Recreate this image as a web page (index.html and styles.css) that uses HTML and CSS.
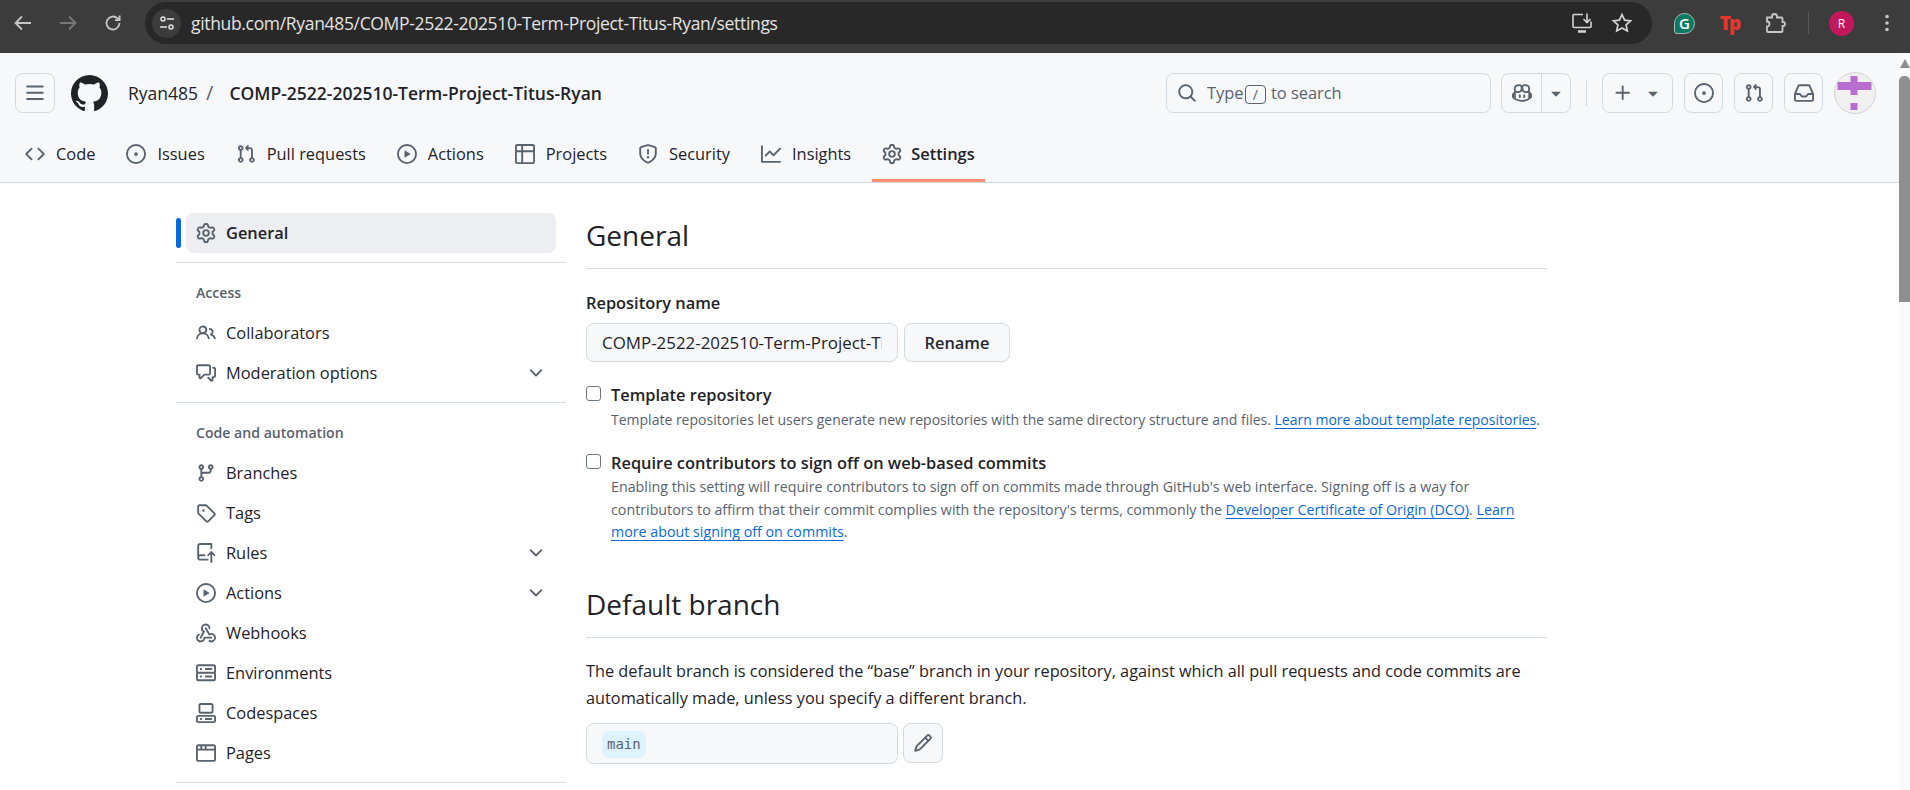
FILE: index.html
```html
<!DOCTYPE html>
<html lang="en">
<head>
    <meta charset="UTF-8">
    <meta name="viewport" content="width=device-width, initial-scale=1.0">
    <title>General - COMP-2522-202510-Term-Project-Titus-Ryan</title>
    <link rel="stylesheet" href="styles.css">
</head>
<body>
    <svg class="sprite" xmlns="http://www.w3.org/2000/svg">
        <symbol id="i-bars" viewBox="0 0 16 16"><path d="M1 2.75A.75.75 0 0 1 1.75 2h12.5a.75.75 0 0 1 0 1.5H1.75A.75.75 0 0 1 1 2.75Zm0 5A.75.75 0 0 1 1.75 7h12.5a.75.75 0 0 1 0 1.5H1.75A.75.75 0 0 1 1 7.75ZM1.75 12h12.5a.75.75 0 0 1 0 1.5H1.75a.75.75 0 0 1 0-1.5Z"/></symbol>
        <symbol id="i-github" viewBox="0 0 16 16"><path d="M8 0c4.42 0 8 3.58 8 8a8.013 8.013 0 0 1-5.45 7.59c-.4.08-.55-.17-.55-.38 0-.27.01-1.13.01-2.2 0-.75-.25-1.23-.54-1.48 1.78-.2 3.65-.88 3.65-3.95 0-.88-.31-1.59-.82-2.15.08-.2.36-1.02-.08-2.12 0 0-.67-.22-2.2.82-.64-.18-1.32-.27-2-.27-.68 0-1.36.09-2 .27-1.53-1.03-2.2-.82-2.2-.82-.44 1.1-.16 1.92-.08 2.12-.51.56-.82 1.28-.82 2.15 0 3.06 1.86 3.75 3.64 3.95-.23.2-.44.55-.51 1.07-.46.21-1.61.55-2.33-.66-.15-.24-.6-.83-1.23-.82-.67.01-.27.38.01.53.34.19.73.9.82 1.13.16.45.68 1.31 2.69.94 0 .67.01 1.3.01 1.49 0 .21-.15.45-.55.38A7.995 7.995 0 0 1 0 8c0-4.42 3.58-8 8-8Z"/></symbol>
        <symbol id="i-search" viewBox="0 0 16 16"><path d="M10.68 11.74a6 6 0 0 1-7.922-8.982 6 6 0 0 1 8.982 7.922l3.04 3.04a.749.749 0 0 1-.326 1.275.749.749 0 0 1-.734-.215ZM11.5 7a4.499 4.499 0 1 0-8.997 0A4.499 4.499 0 0 0 11.5 7Z"/></symbol>
        <symbol id="i-copilot" viewBox="0 0 16 16"><path d="M7.998 15.035c-4.562 0-7.873-2.914-7.998-3.749V9.338c.085-.628.677-1.686 1.588-2.065.013-.07.024-.143.036-.218.029-.183.06-.384.126-.612-.201-.508-.254-1.084-.254-1.656 0-.87.128-1.769.693-2.484.579-.733 1.494-1.124 2.724-1.261 1.206-.134 2.262.034 2.944.765.05.053.096.108.139.165.044-.057.094-.112.143-.165.682-.731 1.738-.899 2.944-.765 1.23.137 2.145.528 2.724 1.261.566.715.693 1.614.693 2.484 0 .572-.053 1.148-.254 1.656.066.228.098.429.126.612.012.076.024.148.037.218.924.385 1.522 1.471 1.591 2.095v1.872c0 .766-3.351 3.795-8.002 3.795Zm0-1.485c2.28 0 4.584-1.11 5.002-1.433V7.862l-.023-.116c-.49.21-1.075.291-1.727.291-1.146 0-2.059-.327-2.71-.991A3.222 3.222 0 0 1 8 6.303a3.24 3.24 0 0 1-.544.743c-.65.664-1.563.991-2.71.991-.652 0-1.236-.081-1.727-.291l-.023.116v4.255c.419.323 2.722 1.433 5.002 1.433ZM6.762 2.83c-.193-.206-.637-.413-1.682-.297-1.019.113-1.479.404-1.713.7-.247.312-.369.789-.369 1.554 0 .793.129 1.171.308 1.371.162.181.519.379 1.442.379.853 0 1.339-.235 1.638-.54.315-.322.527-.827.617-1.553.117-.935-.037-1.395-.241-1.614Zm4.155-.297c-1.044-.116-1.488.091-1.681.297-.204.219-.359.679-.242 1.614.091.726.303 1.231.618 1.553.299.305.784.54 1.638.54.922 0 1.28-.198 1.442-.379.179-.2.308-.578.308-1.371 0-.765-.123-1.242-.37-1.554-.233-.296-.693-.587-1.713-.7Z"/><path d="M6.25 9.037a.75.75 0 0 1 .75.75v1.501a.75.75 0 0 1-1.5 0V9.787a.75.75 0 0 1 .75-.75Zm4.25.75v1.501a.75.75 0 0 1-1.5 0V9.787a.75.75 0 0 1 1.5 0Z"/></symbol>
        <symbol id="i-plus" viewBox="0 0 16 16"><path d="M7.75 2a.75.75 0 0 1 .75.75V7h4.25a.75.75 0 0 1 0 1.5H8.5v4.25a.75.75 0 0 1-1.5 0V8.5H2.75a.75.75 0 0 1 0-1.5H7V2.75A.75.75 0 0 1 7.75 2Z"/></symbol>
        <symbol id="i-issue" viewBox="0 0 16 16"><path d="M8 9.5a1.5 1.5 0 1 0 0-3 1.5 1.5 0 0 0 0 3Z"/><path d="M8 0a8 8 0 1 1 0 16A8 8 0 0 1 8 0ZM1.5 8a6.5 6.5 0 1 0 13 0 6.5 6.5 0 0 0-13 0Z"/></symbol>
        <symbol id="i-pr" viewBox="0 0 16 16"><path d="M1.5 3.25a2.25 2.25 0 1 1 3 2.122v5.256a2.251 2.251 0 1 1-1.5 0V5.372A2.25 2.25 0 0 1 1.5 3.25Zm5.677-.177L9.573.677A.25.25 0 0 1 10 .854V2.5h1A2.5 2.5 0 0 1 13.5 5v5.628a2.251 2.251 0 1 1-1.5 0V5a1 1 0 0 0-1-1h-1v1.646a.25.25 0 0 1-.427.177L7.177 3.427a.25.25 0 0 1 0-.354ZM3.75 2.5a.75.75 0 1 0 0 1.5.75.75 0 0 0 0-1.5Zm0 9.5a.75.75 0 1 0 0 1.5.75.75 0 0 0 0-1.5Zm8.25.75a.75.75 0 1 0 1.5 0 .75.75 0 0 0-1.5 0Z"/></symbol>
        <symbol id="i-inbox" viewBox="0 0 16 16"><path d="M2.8 2.06A1.75 1.75 0 0 1 4.41 1h7.18c.7 0 1.333.417 1.61 1.06l2.74 6.395c.04.093.06.194.06.295v4.5A1.75 1.75 0 0 1 14.25 15H1.75A1.75 1.75 0 0 1 0 13.25v-4.5c0-.101.02-.202.06-.295Zm1.61.44a.25.25 0 0 0-.23.152L1.887 8H4.75a.75.75 0 0 1 .6.3L6.625 10h2.75l1.275-1.7a.75.75 0 0 1 .6-.3h2.863L11.82 2.652a.25.25 0 0 0-.23-.152Zm10.09 7h-2.875l-1.275 1.7a.75.75 0 0 1-.6.3h-3.5a.75.75 0 0 1-.6-.3L4.375 9.5H1.5v3.75c0 .138.112.25.25.25h12.5a.25.25 0 0 0 .25-.25Z"/></symbol>
        <symbol id="i-code" viewBox="0 0 16 16"><path d="m11.28 3.22 4.25 4.25a.75.75 0 0 1 0 1.06l-4.25 4.25a.749.749 0 0 1-1.275-.326.749.749 0 0 1 .215-.734L13.94 8l-3.72-3.72a.749.749 0 0 1 .326-1.275.749.749 0 0 1 .734.215Zm-6.56 0a.751.751 0 0 1 1.042.018.751.751 0 0 1 .018 1.042L2.06 8l3.72 3.72a.749.749 0 0 1-.326 1.275.749.749 0 0 1-.734-.215L.47 8.53a.75.75 0 0 1 0-1.06Z"/></symbol>
        <symbol id="i-play" viewBox="0 0 16 16"><path d="M8 0a8 8 0 1 1 0 16A8 8 0 0 1 8 0ZM1.5 8a6.5 6.5 0 1 0 13 0 6.5 6.5 0 0 0-13 0Zm4.879-2.773 4.264 2.559a.25.25 0 0 1 0 .428l-4.264 2.559A.25.25 0 0 1 6 10.559V5.442a.25.25 0 0 1 .379-.215Z"/></symbol>
        <symbol id="i-table" viewBox="0 0 16 16"><path d="M0 1.75C0 .784.784 0 1.75 0h12.5C15.216 0 16 .784 16 1.75v12.5A1.75 1.75 0 0 1 14.25 16H1.75A1.75 1.75 0 0 1 0 14.25ZM6.5 6.5v8h7.75a.25.25 0 0 0 .25-.25V6.5Zm8-1.5V1.75a.25.25 0 0 0-.25-.25H6.5V5ZM5 6.5H1.5v7.75c0 .138.112.25.25.25H5ZM5 5V1.5H1.75a.25.25 0 0 0-.25.25V5Z"/></symbol>
        <symbol id="i-shield" viewBox="0 0 16 16"><path d="M7.467.133a1.748 1.748 0 0 1 1.066 0l5.25 1.68A1.75 1.75 0 0 1 15 3.48V7c0 1.566-.32 3.182-1.303 4.682-.983 1.498-2.585 2.813-5.032 3.855a1.697 1.697 0 0 1-1.33 0c-2.447-1.042-4.049-2.357-5.032-3.855C1.32 10.182 1 8.566 1 7V3.48a1.75 1.75 0 0 1 1.217-1.667Zm.61 1.429a.25.25 0 0 0-.153 0l-5.25 1.68a.25.25 0 0 0-.174.238V7c0 1.358.275 2.666 1.057 3.86.784 1.194 2.121 2.34 4.366 3.297a.196.196 0 0 0 .154 0c2.245-.956 3.582-2.104 4.366-3.298C13.225 9.666 13.5 8.36 13.5 7V3.48a.251.251 0 0 0-.174-.237l-5.25-1.68ZM8.75 4.75v3a.75.75 0 0 1-1.5 0v-3a.75.75 0 0 1 1.5 0ZM9 10.5a1 1 0 1 1-2 0 1 1 0 0 1 2 0Z"/></symbol>
        <symbol id="i-graph" viewBox="0 0 16 16"><path d="M1.5 1.75V13.5h13.75a.75.75 0 0 1 0 1.5H.75a.75.75 0 0 1-.75-.75V1.75a.75.75 0 0 1 1.5 0Zm14.28 2.53-5.25 5.25a.75.75 0 0 1-1.06 0L7 7.06 4.28 9.78a.751.751 0 0 1-1.042-.018.751.751 0 0 1-.018-1.042l3.25-3.25a.75.75 0 0 1 1.06 0L10 7.94l4.72-4.72a.751.751 0 0 1 1.042.018.751.751 0 0 1 .018 1.042Z"/></symbol>
        <symbol id="i-gear" viewBox="0 0 16 16"><path d="M8 0a8.2 8.2 0 0 1 .701.031C9.444.095 9.99.645 10.16 1.29l.288 1.107c.018.066.079.158.212.224.231.114.454.243.668.386.123.082.233.09.299.071l1.103-.303c.644-.176 1.392.021 1.82.63.27.385.506.792.704 1.218.315.675.111 1.422-.364 1.891l-.814.806c-.049.048-.098.147-.088.294.016.257.016.515 0 .772-.01.147.038.246.088.294l.814.806c.475.469.679 1.216.364 1.891a7.977 7.977 0 0 1-.704 1.217c-.428.61-1.176.807-1.82.63l-1.102-.302c-.067-.019-.177-.011-.3.071a5.909 5.909 0 0 1-.668.386c-.133.066-.194.158-.211.224l-.29 1.106c-.168.646-.715 1.196-1.458 1.26a8.006 8.006 0 0 1-1.402 0c-.743-.064-1.289-.614-1.458-1.26l-.289-1.106c-.018-.066-.079-.158-.212-.224a5.738 5.738 0 0 1-.668-.386c-.123-.082-.233-.09-.299-.071l-1.103.303c-.644.176-1.392-.021-1.82-.63a8.12 8.12 0 0 1-.704-1.218c-.315-.675-.111-1.422.363-1.891l.815-.806c.05-.048.098-.147.088-.294a6.214 6.214 0 0 1 0-.772c.01-.147-.038-.246-.088-.294l-.815-.806C.635 6.045.431 5.298.746 4.623a7.92 7.92 0 0 1 .704-1.217c.428-.61 1.176-.807 1.82-.63l1.102.302c.067.019.177.011.3-.071.214-.143.437-.272.668-.386.133-.066.194-.158.211-.224l.29-1.106C6.009.645 6.556.095 7.299.03 7.53.01 7.764 0 8 0Zm-.571 1.525c-.036.003-.108.036-.137.146l-.289 1.105c-.147.561-.549.967-.998 1.189-.173.086-.34.183-.5.29-.417.278-.97.423-1.529.27l-1.103-.303c-.109-.03-.175.016-.195.045-.22.312-.412.644-.573.99-.014.031-.021.11.059.19l.815.806c.411.406.562.957.53 1.456a4.709 4.709 0 0 0 0 .582c.032.499-.119 1.05-.53 1.456l-.815.806c-.081.08-.073.159-.059.19.162.346.353.677.573.989.02.03.085.076.195.046l1.102-.303c.56-.153 1.113-.008 1.53.27.161.107.328.204.501.29.447.222.85.629.997 1.189l.289 1.105c.029.109.101.143.137.146a6.6 6.6 0 0 0 1.142 0c.036-.003.108-.036.137-.146l.289-1.105c.147-.561.549-.967.998-1.189.173-.086.34-.183.5-.29.417-.278.97-.423 1.529-.27l1.103.303c.109.029.175-.016.195-.045.22-.313.411-.644.573-.99.014-.031.021-.11-.059-.19l-.815-.806c-.411-.406-.562-.957-.53-1.456a4.709 4.709 0 0 0 0-.582c-.032-.499.119-1.05.53-1.456l.815-.806c.081-.08.073-.159.059-.19a6.464 6.464 0 0 0-.573-.989c-.02-.03-.085-.076-.195-.046l-1.102.303c-.56.153-1.113.008-1.53-.27a4.44 4.44 0 0 0-.501-.29c-.447-.222-.85-.629-.997-1.189l-.289-1.105c-.029-.11-.101-.143-.137-.146a6.6 6.6 0 0 0-1.142 0ZM11 8a3 3 0 1 1-6 0 3 3 0 0 1 6 0ZM9.5 8a1.5 1.5 0 1 0-3.001.001A1.5 1.5 0 0 0 9.5 8Z"/></symbol>
        <symbol id="i-people" viewBox="0 0 16 16"><path d="M2 5.5a3.5 3.5 0 1 1 5.898 2.549 5.508 5.508 0 0 1 3.034 4.084.75.75 0 1 1-1.482.235 4 4 0 0 0-7.9 0 .75.75 0 0 1-1.482-.236A5.507 5.507 0 0 1 3.102 8.05 3.493 3.493 0 0 1 2 5.5ZM11 4a3.001 3.001 0 0 1 2.22 5.018 5.01 5.01 0 0 1 2.56 3.012.749.749 0 0 1-.885.954.752.752 0 0 1-.549-.514 3.507 3.507 0 0 0-2.522-2.372.75.75 0 0 1-.574-.73v-.352a.75.75 0 0 1 .416-.672A1.5 1.5 0 0 0 11 5.5.75.75 0 0 1 11 4Zm-5.5-.5a2 2 0 1 0-.001 3.999A2 2 0 0 0 5.5 3.5Z"/></symbol>
        <symbol id="i-comment" viewBox="0 0 16 16"><path d="M1.75 1h8.5c.966 0 1.75.784 1.75 1.75v5.5A1.75 1.75 0 0 1 10.25 10H7.061l-2.574 2.573A1.458 1.458 0 0 1 2 11.543V10h-.25A1.75 1.75 0 0 1 0 8.25v-5.5C0 1.784.784 1 1.75 1ZM1.5 2.75v5.5c0 .138.112.25.25.25h1a.75.75 0 0 1 .75.75v2.19l2.72-2.72a.749.749 0 0 1 .53-.22h3.5a.25.25 0 0 0 .25-.25v-5.5a.25.25 0 0 0-.25-.25h-8.5a.25.25 0 0 0-.25.25Zm13 2a.25.25 0 0 0-.25-.25h-.5a.75.75 0 0 1 0-1.5h.5c.966 0 1.75.784 1.75 1.75v5.5A1.75 1.75 0 0 1 14.25 12H14v1.543a1.458 1.458 0 0 1-2.487 1.03L9.22 12.28a.749.749 0 0 1 .326-1.275.749.749 0 0 1 .734.215l2.22 2.22v-2.19a.75.75 0 0 1 .75-.75h1a.25.25 0 0 0 .25-.25Z"/></symbol>
        <symbol id="i-branch" viewBox="0 0 16 16"><path d="M9.5 3.25a2.25 2.25 0 1 1 3 2.122V6A2.5 2.5 0 0 1 10 8.5H6a1 1 0 0 0-1 1v1.128a2.251 2.251 0 1 1-1.5 0V5.372a2.25 2.25 0 1 1 1.5 0v1.836A2.493 2.493 0 0 1 6 7h4a1 1 0 0 0 1-1v-.628A2.25 2.25 0 0 1 9.5 3.25Zm-6 0a.75.75 0 1 0 1.5 0 .75.75 0 0 0-1.5 0Zm8.25-.75a.75.75 0 1 0 0 1.5.75.75 0 0 0 0-1.5ZM4.25 12a.75.75 0 1 0 0 1.5.75.75 0 0 0 0-1.5Z"/></symbol>
        <symbol id="i-tag" viewBox="0 0 16 16"><path d="M1 7.775V2.75C1 1.784 1.784 1 2.75 1h5.025c.464 0 .91.184 1.238.513l6.25 6.25a1.75 1.75 0 0 1 0 2.474l-5.026 5.026a1.75 1.75 0 0 1-2.474 0l-6.25-6.25A1.75 1.75 0 0 1 1 7.775Zm1.5 0c0 .066.026.13.073.177l6.25 6.25a.25.25 0 0 0 .354 0l5.025-5.025a.25.25 0 0 0 0-.354l-6.25-6.25a.25.25 0 0 0-.177-.073H2.75a.25.25 0 0 0-.25.25ZM6 5a1 1 0 1 1 0 2 1 1 0 0 1 0-2Z"/></symbol>
        <symbol id="i-rules" viewBox="0 0 16 16"><path d="M1 2.5A2.5 2.5 0 0 1 3.5 0h8.75a.75.75 0 0 1 .75.75v3.5a.75.75 0 0 1-1.5 0V1.5h-8a1 1 0 0 0-1 1v6.708A2.493 2.493 0 0 1 3.5 9h3.25a.75.75 0 0 1 0 1.5H3.5a1 1 0 0 0 0 2h5.75a.75.75 0 0 1 0 1.5H3.5A2.5 2.5 0 0 1 1 11.5Zm13.23 7.79h-.001l-1.224-1.224v6.184a.75.75 0 0 1-1.5 0V9.066L10.28 10.29a.75.75 0 0 1-1.06-1.061l2.505-2.504a.75.75 0 0 1 1.06 0L15.29 9.23a.751.751 0 0 1-.018 1.042.751.751 0 0 1-1.042.018Z"/></symbol>
        <symbol id="i-webhook" viewBox="0 0 16 16"><path d="M5.5 4.25a2.25 2.25 0 0 1 4.5 0 .75.75 0 0 0 1.5 0 3.75 3.75 0 1 0-6.14 2.889l-2.272 4.258a.75.75 0 0 0 1.324.706L7 7.25a.75.75 0 0 0-.309-1.015A2.25 2.25 0 0 1 5.5 4.25Z"/><path d="M7.364 3.607a.75.75 0 0 1 1.03.257l2.608 4.349a3.75 3.75 0 1 1-.628 6.785.75.75 0 0 1 .752-1.299 2.25 2.25 0 1 0-.033-3.88.75.75 0 0 1-1.03-.256L7.107 4.636a.75.75 0 0 1 .257-1.03Z"/><path d="M2.9 8.776A.75.75 0 0 1 2.625 9.8 2.25 2.25 0 1 0 6 11.75a.75.75 0 0 1 .75-.751h5.5a.75.75 0 0 1 0 1.5H7.425a3.751 3.751 0 1 1-5.55-3.998.75.75 0 0 1 1.024.274Z"/></symbol>
        <symbol id="i-server" viewBox="0 0 16 16"><path d="M1.75 1h12.5c.966 0 1.75.784 1.75 1.75v4c0 .372-.116.717-.314 1 .198.283.314.628.314 1v4a1.75 1.75 0 0 1-1.75 1.75H1.75A1.75 1.75 0 0 1 0 12.75v-4c0-.358.109-.707.314-1a1.739 1.739 0 0 1-.314-1v-4C0 1.784.784 1 1.75 1ZM1.5 2.75v4c0 .138.112.25.25.25h12.5a.25.25 0 0 0 .25-.25v-4a.25.25 0 0 0-.25-.25H1.75a.25.25 0 0 0-.25.25Zm.25 5.75a.25.25 0 0 0-.25.25v4c0 .138.112.25.25.25h12.5a.25.25 0 0 0 .25-.25v-4a.25.25 0 0 0-.25-.25ZM7 4.75A.75.75 0 0 1 7.75 4h4.5a.75.75 0 0 1 0 1.5h-4.5A.75.75 0 0 1 7 4.75ZM7.75 10h4.5a.75.75 0 0 1 0 1.5h-4.5a.75.75 0 0 1 0-1.5ZM3 4.75A.75.75 0 0 1 3.75 4h.5a.75.75 0 0 1 0 1.5h-.5A.75.75 0 0 1 3 4.75ZM3.75 10h.5a.75.75 0 0 1 0 1.5h-.5a.75.75 0 0 1 0-1.5Z"/></symbol>
        <symbol id="i-codespaces" viewBox="0 0 16 16"><path d="M0 11.25c0-.966.784-1.75 1.75-1.75h12.5c.966 0 1.75.784 1.75 1.75v3A1.75 1.75 0 0 1 14.25 16H1.75A1.75 1.75 0 0 1 0 14.25Zm2-9.5C2 .784 2.784 0 3.75 0h8.5C13.216 0 14 .784 14 1.75v5a1.75 1.75 0 0 1-1.75 1.75h-8.5A1.75 1.75 0 0 1 2 6.75Zm1.75-.25a.25.25 0 0 0-.25.25v5c0 .138.112.25.25.25h8.5a.25.25 0 0 0 .25-.25v-5a.25.25 0 0 0-.25-.25Zm-2 9.5a.25.25 0 0 0-.25.25v3c0 .138.112.25.25.25h12.5a.25.25 0 0 0 .25-.25v-3a.25.25 0 0 0-.25-.25Z"/><path d="M7 12.75a.75.75 0 0 1 .75-.75h4.5a.75.75 0 0 1 0 1.5h-4.5a.75.75 0 0 1-.75-.75Zm-4 0a.75.75 0 0 1 .75-.75h.5a.75.75 0 0 1 0 1.5h-.5a.75.75 0 0 1-.75-.75Z"/></symbol>
        <symbol id="i-browser" viewBox="0 0 16 16"><path d="M0 2.75C0 1.784.784 1 1.75 1h12.5c.966 0 1.75.784 1.75 1.75v10.5A1.75 1.75 0 0 1 14.25 15H1.75A1.75 1.75 0 0 1 0 13.25ZM14.5 6h-13v7.25c0 .138.112.25.25.25h12.5a.25.25 0 0 0 .25-.25Zm-6-3.5v2h6V2.75a.25.25 0 0 0-.25-.25ZM5 2.5v2h2v-2Zm-3.25 0a.25.25 0 0 0-.25.25V4.5h2v-2Z"/></symbol>
        <symbol id="i-chevron" viewBox="0 0 16 16"><path d="M12.78 5.22a.749.749 0 0 1 0 1.06l-4.25 4.25a.749.749 0 0 1-1.06 0L3.22 6.28a.749.749 0 1 1 1.06-1.06L8 8.939l3.72-3.719a.749.749 0 0 1 1.06 0Z"/></symbol>
        <symbol id="i-pencil" viewBox="0 0 16 16"><path d="M11.013 1.427a1.75 1.75 0 0 1 2.474 0l1.086 1.086a1.75 1.75 0 0 1 0 2.474l-8.61 8.61c-.21.21-.47.364-.756.445l-3.251.93a.75.75 0 0 1-.927-.928l.929-3.25c.081-.286.235-.547.445-.758l8.61-8.61Zm.176 4.823L9.75 4.81l-6.286 6.287a.253.253 0 0 0-.064.108l-.558 1.953 1.953-.558a.253.253 0 0 0 .108-.064Zm1.238-3.763a.25.25 0 0 0-.354 0L10.811 3.75l1.439 1.44 1.263-1.263a.25.25 0 0 0 0-.354Z"/></symbol>
        <symbol id="i-caret" viewBox="0 0 16 16"><path d="m4.427 7.427 3.396 3.396a.25.25 0 0 0 .354 0l3.396-3.396A.25.25 0 0 0 11.396 7H4.604a.25.25 0 0 0-.177.427Z"/></symbol>
    </svg>

    <!-- browser toolbar -->
    <div class="chrome">
        <span class="chrome-btn">
            <svg width="24" height="24" viewBox="0 0 24 24" fill="none" stroke="#c7c7c7" stroke-width="1.8"><path d="M20 12H5M11 5.5 4.5 12l6.500 6.500"/></svg>
        </span>
        <span class="chrome-btn">
            <svg width="24" height="24" viewBox="0 0 24 24" fill="none" stroke="#777" stroke-width="1.8"><path d="M4 12h15M13 5.500l6.500 6.500-6.500 6.500"/></svg>
        </span>
        <span class="chrome-btn">
            <svg width="24" height="24" viewBox="0 0 24 24" fill="none" stroke="#c7c7c7" stroke-width="1.8"><path d="M18.500 12a6.500 6.500 0 1 1-2-4.700L18.500 9"/><path d="M18.600 4.500V9.200H14"/></svg>
        </span>
        <div class="omnibox">
            <span class="site-chip">
                <svg width="18" height="18" viewBox="0 0 18 18" fill="none" stroke="#e3e3e3" stroke-width="1.5"><circle cx="5" cy="5" r="2"/><path d="M9 5h7M2 13h7"/><circle cx="13" cy="13" r="2"/></svg>
            </span>
            <span class="url">github.com/Ryan485/COMP-2522-202510-Term-Project-Titus-Ryan/settings</span>
            <span class="omni-actions">
                <svg width="24" height="24" viewBox="0 0 24 24" fill="none" stroke="#d5d5d5" stroke-width="1.6"><path d="M13 3.500H4a1 1 0 0 0-1 1v11a1 1 0 0 0 1 1h16a1 1 0 0 0 1-1v-5"/><path d="M8 20.500h8" stroke-width="2.5"/><path d="M17 2.500v9M13.500 8l3.500 3.500L20.500 8"/></svg>
                <svg width="24" height="24" viewBox="0 0 24 24" fill="none" stroke="#d5d5d5" stroke-width="1.7"><path d="m12 3.500 2.600 5.600 6 .7-4.500 4.100 1.200 6L12 17l-5.300 2.900 1.200-6-4.500-4.100 6-.7Z"/></svg>
            </span>
        </div>
        <div class="extensions">
            <span class="ext"><span class="grammarly">G</span></span>
            <span class="ext"><span class="tp">Tp</span></span>
            <span class="ext">
                <svg width="24" height="24" viewBox="0 0 24 24" fill="none" stroke="#c7c7c7" stroke-width="1.8"><path d="M4 6.500h5v-1a2.500 2.500 0 0 1 5 0v1h4.500a1 1 0 0 1 1 1v3.500h.500a2 2 0 0 1 0 4h-.500v5a1 1 0 0 1-1 1H5a1 1 0 0 1-1-1v-4.500a2.500 2.500 0 0 0 0-5Z"/></svg>
            </span>
            <span class="ext-sep"></span>
            <span class="ext"><span class="profile">R</span></span>
            <span class="ext">
                <svg width="24" height="24" viewBox="0 0 24 24" fill="#c7c7c7"><circle cx="12" cy="5.500" r="1.800"/><circle cx="12" cy="12" r="1.800"/><circle cx="12" cy="18.500" r="1.800"/></svg>
            </span>
        </div>
    </div>

    <div class="viewport">
        <div class="page">
            <header class="app-header">
                <div class="top-row">
                    <button class="icon-btn"><svg class="icon"><use href="#i-bars"/></svg></button>
                    <svg class="logo"><use href="#i-github"/></svg>
                    <a class="owner">Ryan485</a>
                    <span class="slash">/</span>
                    <a class="repo">COMP-2522-202510-Term-Project-Titus-Ryan</a>

                    <div class="search">
                        <svg class="icon"><use href="#i-search"/></svg>
                        <span class="search-text">Type <kbd>/</kbd> to search</span>
                    </div>
                    <div class="split-btn copilot">
                        <span class="split-main"><svg class="icon"><use href="#i-copilot"/></svg></span>
                        <span class="split-caret"><svg class="caret"><use href="#i-caret"/></svg></span>
                    </div>
                    <span class="top-divider"></span>
                    <div class="split-btn create">
                        <svg class="icon"><use href="#i-plus"/></svg>
                        <svg class="caret"><use href="#i-caret"/></svg>
                    </div>
                    <button class="icon-btn"><svg class="icon"><use href="#i-issue"/></svg></button>
                    <button class="icon-btn"><svg class="icon"><use href="#i-pr"/></svg></button>
                    <button class="icon-btn"><svg class="icon"><use href="#i-inbox"/></svg></button>
                    <svg class="avatar" viewBox="0 0 42 42">
                        <circle cx="21" cy="21" r="20.500" fill="#f0f0f0" stroke="#d4d4d4"/>
                        <path fill="#b76ecf" d="M3.500 10h34v8h-34zM16.500 4h7v19h-7zM16.500 31h7v7h-7z"/>
                    </svg>
                </div>
                <nav class="tabs">
                    <a class="tab"><svg class="icon"><use href="#i-code"/></svg>Code</a>
                    <a class="tab"><svg class="icon"><use href="#i-issue"/></svg>Issues</a>
                    <a class="tab"><svg class="icon"><use href="#i-pr"/></svg>Pull requests</a>
                    <a class="tab"><svg class="icon"><use href="#i-play"/></svg>Actions</a>
                    <a class="tab"><svg class="icon"><use href="#i-table"/></svg>Projects</a>
                    <a class="tab"><svg class="icon"><use href="#i-shield"/></svg>Security</a>
                    <a class="tab"><svg class="icon"><use href="#i-graph"/></svg>Insights</a>
                    <a class="tab selected"><svg class="icon"><use href="#i-gear"/></svg>Settings</a>
                </nav>
            </header>

            <div class="layout">
                <aside class="sidebar">
                    <a class="side-item active"><svg class="icon"><use href="#i-gear"/></svg>General</a>
                    <hr class="side-sep">
                    <div class="side-title">Access</div>
                    <a class="side-item"><svg class="icon"><use href="#i-people"/></svg>Collaborators</a>
                    <a class="side-item"><svg class="icon"><use href="#i-comment"/></svg>Moderation options<svg class="icon chev"><use href="#i-chevron"/></svg></a>
                    <hr class="side-sep">
                    <div class="side-title">Code and automation</div>
                    <a class="side-item"><svg class="icon"><use href="#i-branch"/></svg>Branches</a>
                    <a class="side-item"><svg class="icon"><use href="#i-tag"/></svg>Tags</a>
                    <a class="side-item"><svg class="icon"><use href="#i-rules"/></svg>Rules<svg class="icon chev"><use href="#i-chevron"/></svg></a>
                    <a class="side-item"><svg class="icon"><use href="#i-play"/></svg>Actions<svg class="icon chev"><use href="#i-chevron"/></svg></a>
                    <a class="side-item"><svg class="icon"><use href="#i-webhook"/></svg>Webhooks</a>
                    <a class="side-item"><svg class="icon"><use href="#i-server"/></svg>Environments</a>
                    <a class="side-item"><svg class="icon"><use href="#i-codespaces"/></svg>Codespaces</a>
                    <a class="side-item"><svg class="icon"><use href="#i-browser"/></svg>Pages</a>
                    <hr class="side-sep">
                </aside>

                <main class="content">
                    <h2 class="section-head">General</h2>
                    <label class="field-label" for="repoName">Repository name</label>
                    <div class="rename-row">
                        <input class="text-input" id="repoName" type="text" value="COMP-2522-202510-Term-Project-Titus-Ryan">
                        <button class="btn">Rename</button>
                    </div>

                    <div class="check-row first">
                        <input type="checkbox" id="template">
                        <div>
                            <label class="check-label" for="template">Template repository</label>
                            <p class="note">Template repositories let users generate new repositories with the same directory structure and files. <a>Learn more about template repositories</a>.</p>
                        </div>
                    </div>
                    <div class="check-row">
                        <input type="checkbox" id="signoff">
                        <div>
                            <label class="check-label" for="signoff">Require contributors to sign off on web-based commits</label>
                            <p class="note long">Enabling this setting will require contributors to sign off on commits made through GitHub's web interface. Signing off is a way for<br>contributors to affirm that their commit complies with the repository's terms, commonly the <a>Developer Certificate of Origin (DCO)</a>. <a>Learn<br>more about signing off on commits</a>.</p>
                        </div>
                    </div>

                    <h2 class="section-head branch-head">Default branch</h2>
                    <p class="lead">The default branch is considered the “base” branch in your repository, against which all pull requests and code commits are<br>automatically made, unless you specify a different branch.</p>
                    <div class="branch-row">
                        <div class="branch-box"><code class="branch-chip">main</code></div>
                        <button class="pencil-btn"><svg class="icon"><use href="#i-pencil"/></svg></button>
                    </div>
                </main>
            </div>
        </div>

        <div class="scrollbar">
            <span class="scroll-arrow"></span>
            <span class="scroll-thumb"></span>
        </div>
    </div>
</body>
</html>
```

FILE: styles.css
```css
* {
    box-sizing: border-box;
}
html, body {
    margin: 0;
    height: 790px;
    overflow: hidden;
}
body {
    font-family: "Open Sans", "Noto Sans", sans-serif;
    font-size: 16.4px;
    line-height: 26.25px;
    color: #1f2328;
    background-color: #fff;
}
.sprite {
    display: none;
}
.icon {
    width: 20px;
    height: 20px;
    flex: none;
    fill: #59636e;
}

/* browser toolbar */
.chrome {
    display: flex;
    height: 53px;
    background-color: #3c3c3c;
}
.chrome-btn {
    width: 45px;
    height: 46px;
    display: flex;
    align-items: center;
    justify-content: center;
    flex: none;
}
.omnibox {
    display: flex;
    align-items: center;
    width: 1507px;
    height: 42px;
    margin: 2px 0 0 10px;
    padding: 0 18px 0 7px;
    border-radius: 21px;
    background-color: #282828;
}
.site-chip {
    width: 29px;
    height: 29px;
    border-radius: 50%;
    background-color: #3c3c3c;
    display: flex;
    align-items: center;
    justify-content: center;
}
.url {
    margin-left: 10px;
    color: #e3e3e3;
    font-size: 17.5px;
    letter-spacing: -0.33px;
}
.omni-actions {
    margin-left: auto;
    display: flex;
    gap: 16px;
}
.extensions {
    display: flex;
    align-items: center;
    height: 46px;
    margin-left: 10px;
}
.ext {
    width: 45px;
    display: flex;
    align-items: center;
    justify-content: center;
}
.ext-sep {
    width: 22px;
    height: 22px;
    background: linear-gradient(#5a5a5a, #5a5a5a) center / 1px 100% no-repeat;
}
.grammarly {
    width: 21px;
    height: 21px;
    border-radius: 50% 50% 50% 3px;
    border: 1px solid #a9b8b3;
    background-color: #0c7a63;
    color: #fff;
    font-size: 15px;
    font-weight: 600;
    line-height: 19px;
    text-align: center;
}
.tp {
    color: #e8352c;
    font-size: 19px;
    font-weight: 800;
    letter-spacing: -2px;
}
.profile {
    width: 25px;
    height: 25px;
    border-radius: 50%;
    background-color: #c2185b;
    color: #fff;
    font-size: 12px;
    line-height: 25px;
    text-align: center;
}

.viewport {
    display: flex;
    height: 737px;
}
.page {
    flex: 1;
    min-width: 0;
}

/* github header */
.app-header {
    height: 130px;
    padding-top: 20px;
    background-color: #f6f8fa;
    border-bottom: 1px solid #d1d9e0;
}
.top-row {
    display: flex;
    align-items: center;
    height: 40px;
    padding: 0 23px 0 15px;
    font-size: 17.5px;
}
.icon-btn {
    width: 39px;
    height: 40px;
    padding: 0;
    margin-left: 11px;
    display: flex;
    align-items: center;
    justify-content: center;
    background-color: #f6f8fa;
    border: 1px solid #d1d9e0;
    border-radius: 7.5px;
}
.top-row > .icon-btn:first-child {
    width: 40px;
    margin-left: 0;
}
.logo {
    width: 37px;
    height: 37px;
    margin-left: 16px;
    fill: #1f2328;
}
.owner {
    margin-left: 20px;
}
.slash {
    margin: 0 16px 0 8px;
    color: #59636e;
    font-size: 20px;
}
.repo {
    font-weight: 600;
}
.search {
    display: flex;
    align-items: center;
    gap: 10px;
    width: 325px;
    height: 40px;
    margin-left: auto;
    padding-left: 10px;
    border: 1px solid #d1d9e0;
    border-radius: 7.5px;
    color: #59636e;
    font-size: 16.4px;
}
.search kbd {
    display: inline-block;
    width: 21px;
    height: 19px;
    margin: 0 1px 0 -3px;
    border: 1px solid #59636e;
    border-radius: 4px;
    font-family: inherit;
    font-size: 14px;
    line-height: 17px;
    text-align: center;
    vertical-align: -1px;
}
.split-btn {
    display: flex;
    align-items: center;
    height: 40px;
    border: 1px solid #d1d9e0;
    border-radius: 7.5px;
}
.copilot {
    width: 70px;
    margin-left: 10px;
}
.split-main {
    width: 40px;
    height: 100%;
    display: flex;
    align-items: center;
    justify-content: center;
    border-right: 1px solid #d1d9e0;
}
.split-caret {
    flex: 1;
    display: flex;
    justify-content: center;
}
.caret {
    width: 20px;
    height: 20px;
    fill: #59636e;
}
.top-divider {
    width: 1px;
    height: 25px;
    margin: 0 15px;
    background-color: #d1d9e0;
}
.create {
    width: 71px;
    gap: 10px;
    padding-left: 10px;
}
.avatar {
    width: 42px;
    height: 42px;
    margin-left: 11px;
    flex: none;
}

/* repo tabs */
.tabs {
    display: flex;
    gap: 11px;
    height: 40px;
    margin-top: 21px;
    padding-left: 15px;
}
.tab {
    position: relative;
    display: flex;
    align-items: center;
    gap: 11px;
    padding: 0 10px;
    white-space: nowrap;
}
.tab.selected {
    gap: 9px;
    font-weight: 600;
}
.tab.selected::after {
    content: "";
    position: absolute;
    left: 0;
    right: 0;
    bottom: -7.5px;
    height: 2.5px;
    background-color: #fd8c73;
}

/* sidebar */
.layout {
    display: flex;
    gap: 20px;
    padding-left: 176px;
}
.sidebar {
    width: 390px;
    flex: none;
    padding-top: 30px;
}
.side-item {
    position: relative;
    display: flex;
    align-items: center;
    gap: 10px;
    width: 370px;
    height: 40px;
    margin-left: 10px;
    padding: 0 10px;
    border-radius: 7.5px;
}
.side-item.active {
    background-color: #eceef1;
    font-weight: 600;
}
.side-item.active::before {
    content: "";
    position: absolute;
    left: -10px;
    top: 5px;
    width: 5px;
    height: 30px;
    border-radius: 5px;
    background-color: #0969da;
}
.chev {
    margin-left: auto;
}
.side-sep {
    height: 1px;
    margin: 9px 0 0;
    border: 0;
    background-color: #d8dee4;
}
.side-title {
    height: 22px;
    margin: 19px 0 9px 20px;
    color: #59636e;
    font-size: 14.1px;
    font-weight: 600;
    line-height: 22px;
}

/* settings form */
.content {
    width: 961px;
    flex: none;
    padding-top: 30px;
}
.section-head {
    margin: 0;
    padding-bottom: 10px;
    border-bottom: 1px solid #d8dee4;
    font-size: 28px;
    font-weight: 400;
    line-height: 45px;
}
.field-label {
    display: block;
    margin: 21px 0 7px;
    font-weight: 600;
}
.rename-row {
    display: flex;
    gap: 6px;
}
.text-input {
    width: 312px;
    height: 39px;
    padding: 0 15px;
    font: inherit;
    font-size: 16.9px;
    color: #1f2328;
    background-color: #f6f8fa;
    border: 1px solid #d1d9e0;
    border-radius: 7.5px;
}
.btn {
    width: 106px;
    height: 39px;
    font: inherit;
    font-weight: 600;
    color: #25292e;
    background-color: #f6f8fa;
    border: 1px solid #d1d9e0;
    border-radius: 7.5px;
}
.check-row {
    display: flex;
    gap: 10px;
    margin-top: 19px;
}
.check-row.first {
    margin-top: 20px;
}
.check-row input {
    appearance: none;
    width: 15px;
    height: 15px;
    margin: 4px 0 0;
    flex: none;
    background-color: #fff;
    border: 1px solid #6e7781;
    border-radius: 3px;
}
.check-label {
    display: block;
    font-weight: 600;
}
.note {
    margin: 0;
    color: #59636e;
    font-size: 14px;
    line-height: 22.5px;
    white-space: nowrap;
}
.note.long {
    font-size: 14.25px;
}
.note a {
    color: #0969da;
    text-decoration: underline;
    text-underline-offset: 3px;
}
.branch-head {
    margin-top: 38.5px;
}
.lead {
    margin: 20px 0 12.5px;
    font-size: 16.3px;
}
.branch-row {
    display: flex;
    gap: 5px;
    align-items: flex-start;
}
.branch-box {
    width: 312px;
    height: 41px;
    padding: 6px 15px;
    background-color: #f6f8fa;
    border: 1px solid #d1d9e0;
    border-radius: 7.5px;
}
.branch-chip {
    display: inline-block;
    height: 27px;
    padding: 0 5px;
    border-radius: 7.5px;
    background-color: #ddf4ff;
    color: #59636e;
    font-family: "DejaVu Sans Mono", "Liberation Mono", monospace;
    font-size: 14px;
    line-height: 27px;
}
.pencil-btn {
    width: 40px;
    height: 40px;
    padding: 0;
    display: flex;
    align-items: center;
    justify-content: center;
    background-color: #f6f8fa;
    border: 1px solid #d1d9e0;
    border-radius: 7.5px;
}

/* window scrollbar */
.scrollbar {
    width: 11px;
    flex: none;
    padding-top: 6px;
    background-color: #fafafa;
}
.scroll-arrow {
    display: block;
    width: 0;
    height: 0;
    margin: 0 auto;
    border-left: 5.5px solid transparent;
    border-right: 5.5px solid transparent;
    border-bottom: 9px solid #8c8c8c;
}
.scroll-thumb {
    display: block;
    height: 226px;
    margin-top: 8px;
    border-radius: 5px 5px 0 0;
    background-color: #8f8f8f;
}
```
